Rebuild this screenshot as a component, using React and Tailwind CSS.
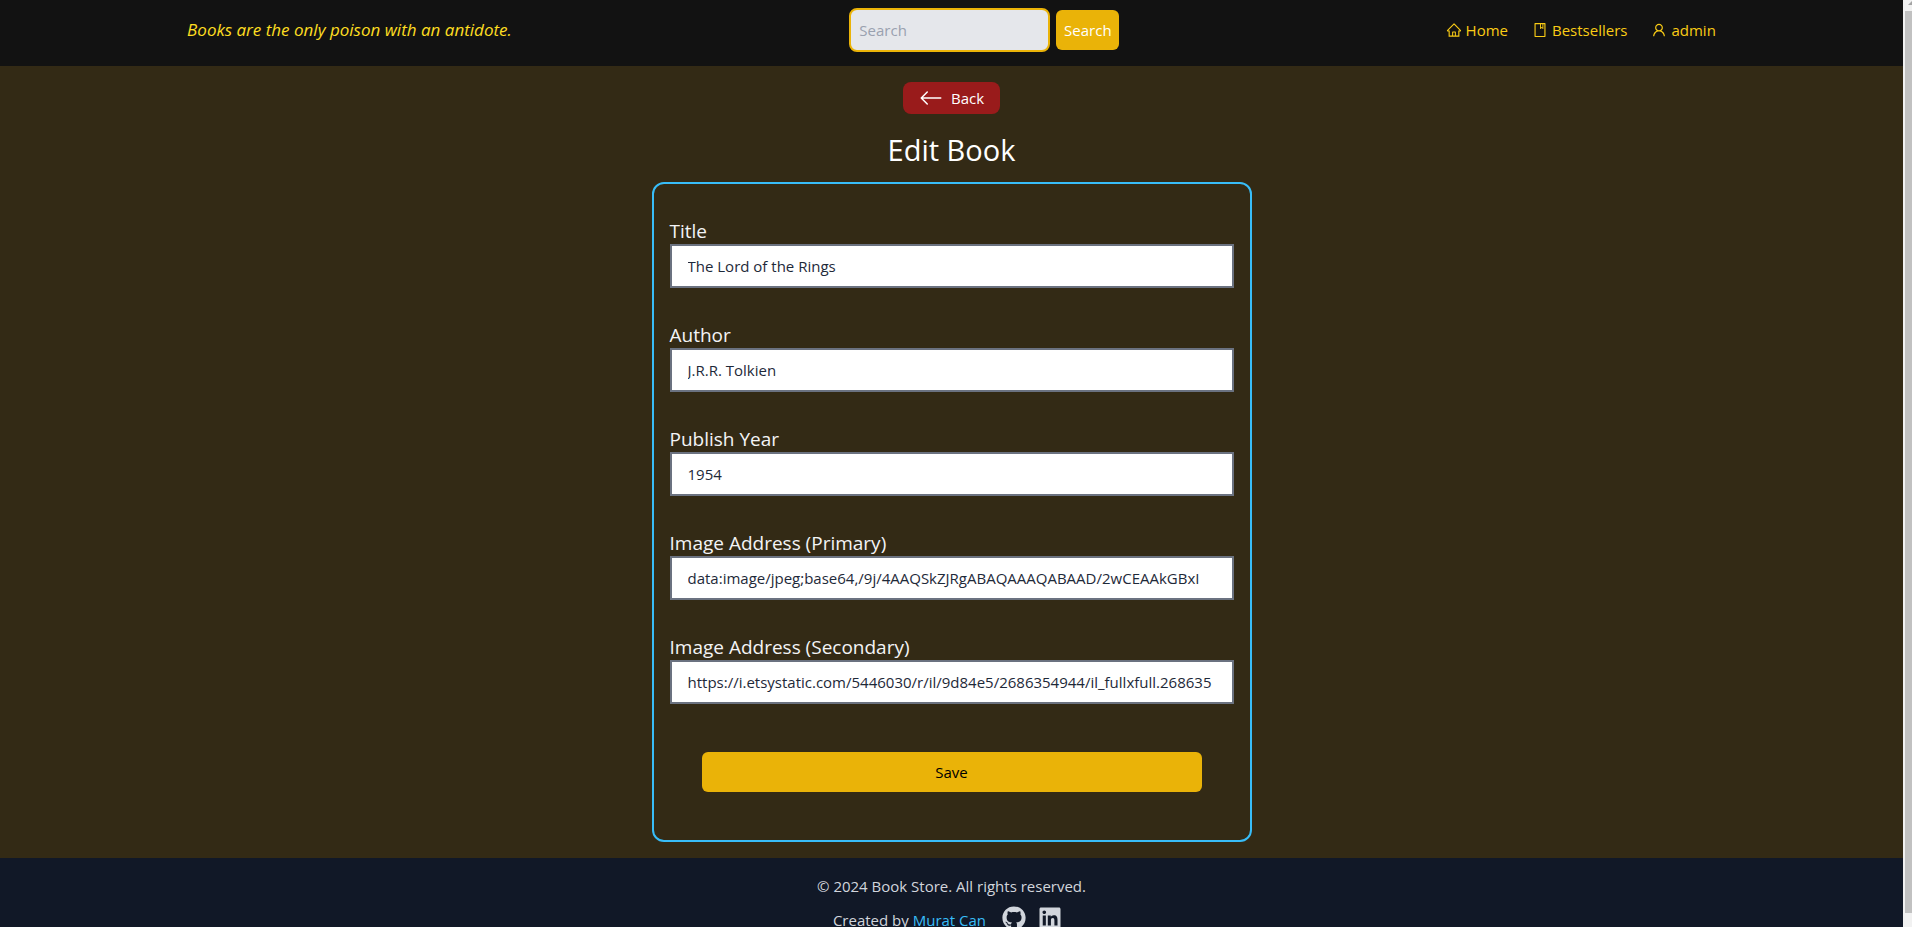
import { AiOutlineHome, AiOutlineBook, AiOutlineUser } from "react-icons/ai";
import { BsArrowLeft } from "react-icons/bs";
import { FaGithub, FaLinkedin } from "react-icons/fa";

const fields = [
  { id: "title", label: "Title", value: "The Lord of the Rings" },
  { id: "author", label: "Author", value: "J.R.R. Tolkien" },
  { id: "year", label: "Publish Year", value: "1954" },
  {
    id: "primary",
    label: "Image Address (Primary)",
    value: "data:image/jpeg;base64,/9j/4AAQSkZJRgABAQAAAQABAAD/2wCEAAkGBxI",
  },
  {
    id: "secondary",
    label: "Image Address (Secondary)",
    value: "https://i.etsystatic.com/5446030/r/il/9d84e5/2686354944/il_fullxfull.268635",
  },
];

const links = [
  { label: "Home", Icon: AiOutlineHome },
  { label: "Bestsellers", Icon: AiOutlineBook },
  { label: "admin", Icon: AiOutlineUser },
];

function Header() {
  return (
    <header className="flex items-start justify-around bg-[#121212] px-6 pt-2 pb-3.5">
      <p className="min-w-[336px] text-[17px] leading-11 text-yellow-300 italic">
        Books are the only poison with an antidote.
      </p>
      <form className="flex items-center gap-1.5">
        <input
          type="search"
          aria-label="Search"
          placeholder="Search"
          className="h-11 w-[201px] rounded-lg border-2 border-[#eab308] bg-gray-200 px-2 placeholder:text-gray-400"
        />
        <button type="button" className="h-10 w-[63px] rounded-md bg-[#eab308] text-center text-white">
          Search
        </button>
      </form>
      <nav className="flex h-11 items-center gap-6 text-[#facc15]">
        {links.map(({ label, Icon }) => (
          <a key={label} href="#" className="flex items-center gap-1">
            <Icon className="size-4" />
            {label}
          </a>
        ))}
      </nav>
    </header>
  );
}

function EditForm() {
  return (
    <form className="w-full max-w-[600px] rounded-xl border-2 border-[#38bdf8] px-4 pt-8 pb-12">
      <div className="flex flex-col gap-8">
        {fields.map(({ id, label, value }) => (
          <div key={id}>
            <label htmlFor={id} className="block pt-0.5 text-[19px] leading-[26px] font-medium text-gray-100">
              {label}
            </label>
            <input
              id={id}
              type="text"
              defaultValue={value}
              className="block h-11 w-full border-2 border-[#6b7280] bg-white px-4 text-gray-800"
            />
          </div>
        ))}
      </div>
      <button type="button" className="mx-auto mt-12 block h-10 w-[500px] rounded-md bg-[#eab308] text-black">
        Save
      </button>
    </form>
  );
}

function Footer() {
  return (
    <footer className="flex grow flex-col items-center bg-[#111827] pt-4 text-gray-300">
      <p className="leading-6">© 2024 Book Store. All rights reserved.</p>
      <div className="mt-2 flex shrink-0 items-start pr-2">
        <p className="pt-0.5 leading-6">
          Created by{" "}
          <a href="#" className="text-[#38bdf8]">
            Murat Can
          </a>
        </p>
        <a href="#" aria-label="GitHub" className="ml-4">
          <FaGithub className="size-6" />
        </a>
        <a href="#" aria-label="LinkedIn" className="ml-3">
          <FaLinkedin className="size-6" />
        </a>
      </div>
    </footer>
  );
}

function Scrollbar() {
  return (
    <div aria-hidden="true" className="flex w-[9px] shrink-0 flex-col items-end overflow-hidden bg-[#f1f1f1]">
      <svg viewBox="0 0 7 11" className="h-[11px] w-[7px] shrink-0">
        <path d="M3 5 L8 0 V5 Z" fill="#a3a3a3" />
      </svg>
      <div className="mb-3.5 w-[7px] grow bg-[#c1c1c1]" />
    </div>
  );
}

export default function App() {
  return (
    <div className="flex h-screen overflow-hidden font-['Open_Sans','Noto_Sans',sans-serif] text-[15px]">
      <div className="flex min-w-0 grow flex-col overflow-hidden bg-[#332a15]">
        <Header />
        <main className="flex shrink-0 flex-col items-center px-4 py-4">
          <a href="#" className="flex h-8 items-center gap-2 rounded-lg bg-[#991b1b] px-4 font-medium text-white">
            <BsArrowLeft className="size-6" />
            Back
          </a>
          <h1 className="mt-[18px] mb-3.5 text-[29px] leading-9 text-white">Edit Book</h1>
          <EditForm />
        </main>
        <Footer />
      </div>
      <Scrollbar />
    </div>
  );
}
